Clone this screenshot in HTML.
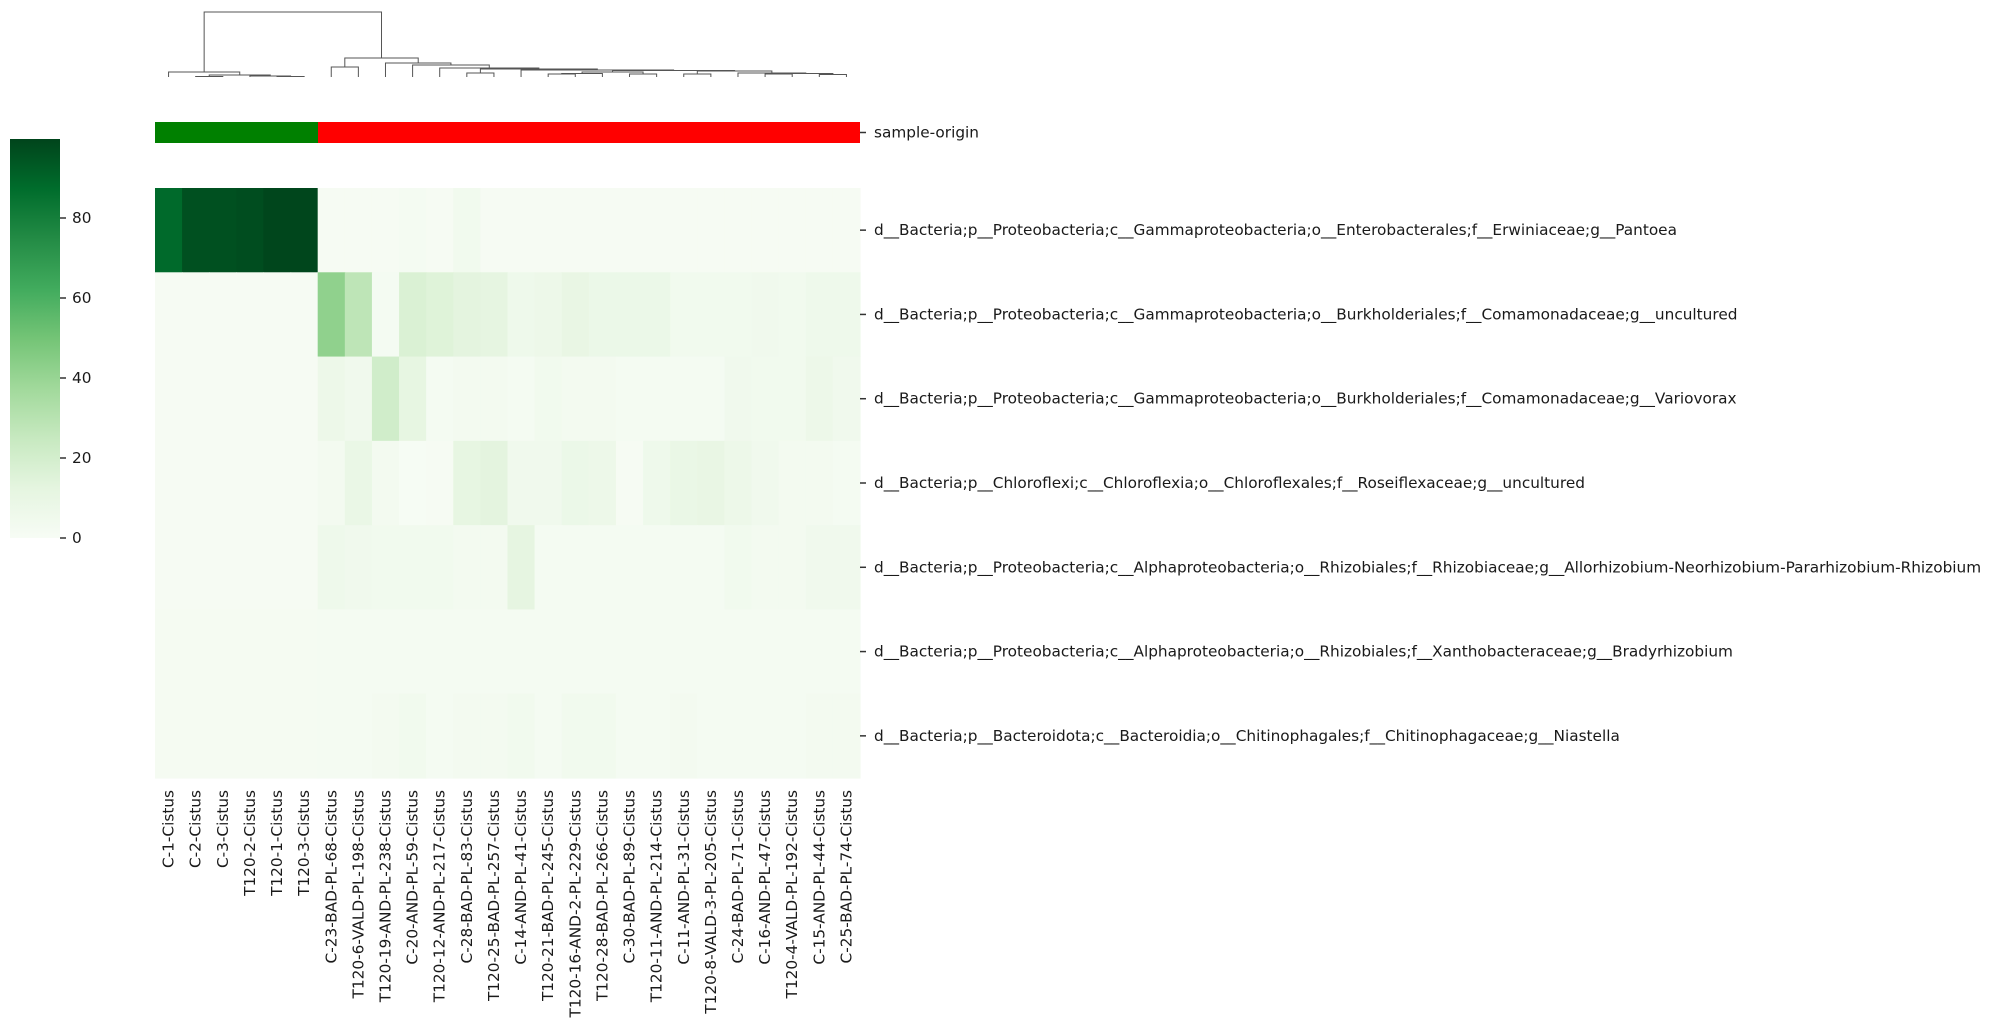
<!DOCTYPE html>
<html><head><meta charset="utf-8"><style>
html,body{margin:0;padding:0;background:#fff;}
svg{display:block;font-family:"DejaVu Sans","Liberation Sans",sans-serif;}
</style></head><body>
<svg id="s" width="1994" height="1030" xmlns="http://www.w3.org/2000/svg">
<defs>
<linearGradient id="cb" x1="0" y1="1" x2="0" y2="0">
<stop offset="0" stop-color="#f7fcf5"/><stop offset="0.125" stop-color="#e5f5e0"/>
<stop offset="0.25" stop-color="#c7e9c0"/><stop offset="0.375" stop-color="#a1d99b"/>
<stop offset="0.5" stop-color="#74c476"/><stop offset="0.625" stop-color="#41ab5d"/>
<stop offset="0.75" stop-color="#238b45"/><stop offset="0.875" stop-color="#006d2c"/>
<stop offset="1" stop-color="#00441b"/>
</linearGradient>
</defs>
<rect x="10" y="139" width="50" height="399" fill="url(#cb)"/>
<g stroke="#333" stroke-width="1.5">
<line x1="60" y1="218" x2="66" y2="218"/><line x1="60" y1="298" x2="66" y2="298"/>
<line x1="60" y1="378" x2="66" y2="378"/><line x1="60" y1="458" x2="66" y2="458"/>
<line x1="60" y1="538" x2="66" y2="538"/>
</g>
<g font-size="15.3" fill="#1a1a1a" dominant-baseline="central">
<text x="72" y="218">80</text><text x="72" y="298">60</text><text x="72" y="378">40</text>
<text x="72" y="458">20</text><text x="72" y="538">0</text>
</g>
<rect x="155" y="122" width="163" height="21" fill="#008000"/>
<rect x="318" y="122" width="542" height="21" fill="#ff0000"/>
<g id="heat"></g>
<g id="dend" stroke="#555" stroke-width="1" fill="none"></g>
<g stroke="#333" stroke-width="1.5" id="rt"></g>
<g font-size="15.3" fill="#1a1a1a" id="lab"></g>
</svg>
<script>
var NS="http://www.w3.org/2000/svg";
function el(p,t,a,txt){var e=document.createElementNS(NS,t);for(var k in a)e.setAttribute(k,a[k]);if(txt!==undefined)e.textContent=txt;p.appendChild(e);return e;}
var st=["#f7fcf5","#e5f5e0","#c7e9c0","#a1d99b","#74c476","#41ab5d","#238b45","#006d2c","#00441b"];
function hx(h){return [parseInt(h.substr(1,2),16),parseInt(h.substr(3,2),16),parseInt(h.substr(5,2),16)];}
function col(v){var t=Math.max(0,Math.min(1,v/99.7))*8;var i=Math.min(7,Math.floor(t));var f=t-i;var a=hx(st[i]),b=hx(st[i+1]);
return "rgb("+a.map(function(x,j){return Math.round(x+(b[j]-x)*f)}).join(",")+")";}
var cols=["C-1-Cistus","C-2-Cistus","C-3-Cistus","T120-2-Cistus","T120-1-Cistus","T120-3-Cistus","C-23-BAD-PL-68-Cistus","T120-6-VALD-PL-198-Cistus","T120-19-AND-PL-238-Cistus","C-20-AND-PL-59-Cistus","T120-12-AND-PL-217-Cistus","C-28-BAD-PL-83-Cistus","T120-25-BAD-PL-257-Cistus","C-14-AND-PL-41-Cistus","T120-21-BAD-PL-245-Cistus","T120-16-AND-2-PL-229-Cistus","T120-28-BAD-PL-266-Cistus","C-30-BAD-PL-89-Cistus","T120-11-AND-PL-214-Cistus","C-11-AND-PL-31-Cistus","T120-8-VALD-3-PL-205-Cistus","C-24-BAD-PL-71-Cistus","C-16-AND-PL-47-Cistus","T120-4-VALD-PL-192-Cistus","C-15-AND-PL-44-Cistus","C-25-BAD-PL-74-Cistus"];
var rows=["d__Bacteria;p__Proteobacteria;c__Gammaproteobacteria;o__Enterobacterales;f__Erwiniaceae;g__Pantoea",
"d__Bacteria;p__Proteobacteria;c__Gammaproteobacteria;o__Burkholderiales;f__Comamonadaceae;g__uncultured",
"d__Bacteria;p__Proteobacteria;c__Gammaproteobacteria;o__Burkholderiales;f__Comamonadaceae;g__Variovorax",
"d__Bacteria;p__Chloroflexi;c__Chloroflexia;o__Chloroflexales;f__Roseiflexaceae;g__uncultured",
"d__Bacteria;p__Proteobacteria;c__Alphaproteobacteria;o__Rhizobiales;f__Rhizobiaceae;g__Allorhizobium-Neorhizobium-Pararhizobium-Rhizobium",
"d__Bacteria;p__Proteobacteria;c__Alphaproteobacteria;o__Rhizobiales;f__Xanthobacteraceae;g__Bradyrhizobium",
"d__Bacteria;p__Bacteroidota;c__Bacteroidia;o__Chitinophagales;f__Chitinophagaceae;g__Niastella"];
var V=[
[88,96,96,97,99,99,1,1,1,2,1,4,1,1,1,1,1,1,1,1,1,1,1,1,1,1],
[1,1,1,1,1,1,42,28,2,17,15,13,12,6,7,10,8,8,8,4,4,4,5,4,6,6],
[1,1,1,1,1,1,7,5,21,11,2,3,3,2,4,3,3,2,2,2,2,5,4,4,7,5],
[1,1,1,1,1,1,3,9,3,0.5,1,11,13,5,5,8,7,1,6,9,10,7,5,3,3,2],
[1,1,1,1,1,1,6,5,4,4,4,3,3,12,2,2,2,2,2,2,2,4,3,3,5,5],
[1.5,1.5,1.5,1.5,1.5,1.5,2,2,2,2,2,2,2,2,2,2,2,2,2,2,2,2,2,2,2,2],
[1.5,1.5,1.5,1.5,1.5,1.5,2,2,3,4,2,3,3,4,2,4,4,2,2,3,2,2,2,2,3,3]];
var s=document.getElementById("s"),H=document.getElementById("heat"),L=document.getElementById("lab"),R=document.getElementById("rt");
var x0=155,cw=705/26,y0=188,rh=590/7;
for(var r=0;r<7;r++)for(var c=0;c<26;c++)el(H,"rect",{x:x0+c*cw,y:y0+r*rh,width:cw+0.6,height:rh+0.6,fill:col(V[r][c])});
el(R,"line",{x1:860,y1:132.5,x2:866,y2:132.5});
el(L,"text",{x:874,y:132.5,"dominant-baseline":"central"},"sample-origin");
for(var r=0;r<7;r++){var y=y0+rh*(r+.5);el(R,"line",{x1:860,y1:y,x2:866,y2:y});el(L,"text",{x:874,y:y,"dominant-baseline":"central"},rows[r]);}
for(var c=0;c<26;c++){var x=x0+cw*(c+.5);el(L,"text",{x:0,y:0,"text-anchor":"end","dominant-baseline":"central",transform:"translate("+x+",790) rotate(-90)"},cols[c]);}
function cx(i){return x0+cw*(i+.5);}
var D=document.getElementById("dend");
function U(a,b,top,ya,yb){el(D,"path",{d:"M"+a+" "+ya+"V"+top+"H"+b+"V"+yb});return (a+b)/2;}
var B=77;
var a1=U(cx(4),cx(5),76.5,B,B);
var a2=U(cx(1),cx(2),76.5,B,B);
var a3=U(cx(3),a1,76,B,76.5);
var a4=U(a2,a3,75,76.5,76);
var a5=U(cx(0),a4,72,B,75);
var b1=U(cx(6),cx(7),67,B,B);
var r1=U(cx(11),cx(12),73,B,B);
var r2=U(cx(14),cx(15),74,B,B);
var r3=U(r2,cx(16),73.5,74,B);
var r4=U(cx(17),cx(18),74,B,B);
var r5=U(r3,r4,72,73.5,74);
var r6=U(cx(19),cx(20),74,B,B);
var r7=U(cx(22),cx(23),74,B,B);
var r8=U(cx(24),cx(25),74.5,B,B);
var r9=U(r7,r8,73.5,74,74.5);
var r10=U(cx(21),r9,73,B,73.5);
var r11=U(r6,r10,71,74,73);
var r12=U(r5,r11,70.5,72,71);
var r13=U(cx(13),r12,70,B,70.5);
var r14=U(r1,r13,69,73,70);
var r15=U(cx(10),r14,68,B,69);
var r16=U(cx(9),r15,65,B,68);
var r17=U(cx(8),r16,63,B,65);
var b2=U(b1,r17,58,67,63);
U(a5,b2,12,72,58);
</script>
</body></html>
